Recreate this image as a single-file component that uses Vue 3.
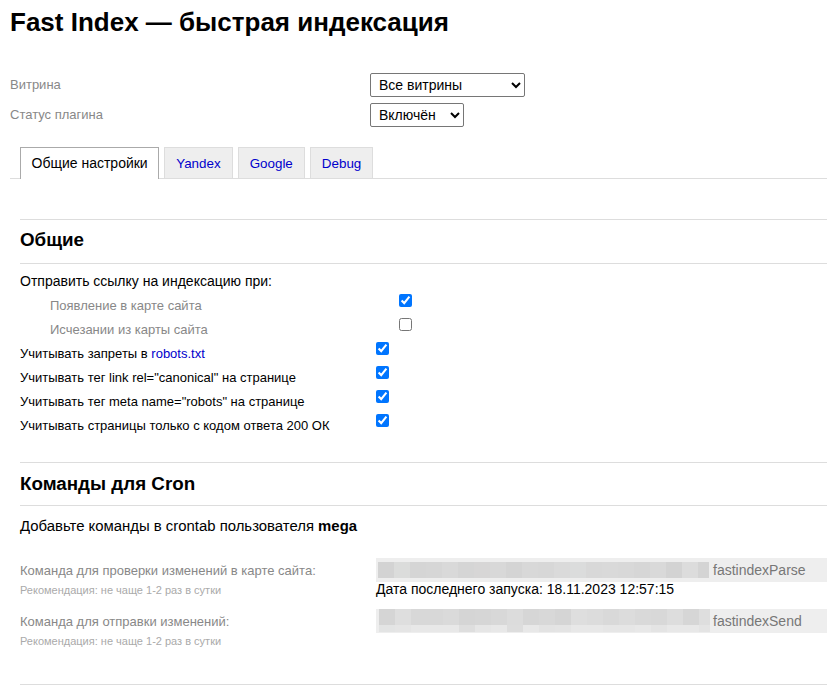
<script setup>
const tabs = ["Yandex", "Google", "Debug"];

const subOptions = [
  { label: "Появление в карте сайта", checked: true },
  { label: "Исчезании из карты сайта", checked: false },
];

const options = [
  'Учитывать тег link rel="canonical" на странице',
  'Учитывать тег meta name="robots" на странице',
  "Учитывать страницы только с кодом ответа 200 ОК",
];

// замазанный путь в команде
const shades1 = ["#d3d3d3", "#dbdcdb", "#d5d5d5", "#d6d6d6", "#d9d9d9", "#d5d5d5", "#d7d6d6", "#d8d8d8", "#d4d4d4", "#d8d8d8", "#d7d7d7", "#dadada", "#dbdcdc", "#d8d8d8", "#d9d9d9", "#d8d8d8", "#d6d6d6", "#d9d9d9", "#d3d3d3", "#dcdcdc", "#d4d4d4", "#dadada"];
const shades2 = ["#d5d5d5", "#dedede", "#d8d8d8", "#d8d8d8", "#dadada", "#d5d5d5", "#d6d6d6", "#d8d8d8", "#dcdcdc", "#d6d6d6", "#d8d8d8", "#d5d5d5", "#dedede", "#dcdcdc", "#d9d9d9", "#dcdcdc", "#d9d9d9", "#d8d8d8", "#dddddd", "#d6d6d6", "#dedede", "#dcdcdc"];
const shades2Low = ["#e3e4e4", "#e5e5e5", "#e8e8e8", "#e8e8e8", "#e8e8e8", "#dedede", "#e6e6e6", "#e8e8e8", "#dddddd", "#e8e8e8", "#e3e3e3", "#e4e4e4", "#e8e8e8", "#e8e8e8", "#e6e6e6", "#e6e6e6", "#e8e8e8", "#e4e4e4", "#e8e8e8", "#e8e8e8", "#e4e4e4", "#e2e2e2"];
</script>

<template>
  <div class="page">
    <h1>Fast Index — быстрая индексация</h1>

    <div class="field first">
      <label>Витрина</label>
      <select class="sel-wide"><option>Все витрины</option></select>
    </div>
    <div class="field">
      <label>Статус плагина</label>
      <select class="sel-small"><option>Включён</option></select>
    </div>

    <div class="tabs">
      <div class="tab active">Общие настройки</div>
      <a v-for="tab in tabs" :key="tab" class="tab" href="#">{{ tab }}</a>
    </div>

    <div class="content">
      <h2>Общие</h2>
      <div class="intro">Отправить ссылку на индексацию при:</div>

      <div v-for="item in subOptions" :key="item.label" class="row sub">
        <span class="row-label">{{ item.label }}</span>
        <input type="checkbox" :checked="item.checked" />
      </div>

      <div class="row">
        <span class="row-label">Учитывать запреты в <a href="#">robots.txt</a></span>
        <input type="checkbox" checked />
      </div>
      <div v-for="item in options" :key="item" class="row">
        <span class="row-label">{{ item }}</span>
        <input type="checkbox" checked />
      </div>

      <h2 class="cron-title">Команды для Cron</h2>
      <div class="cron-note">Добавьте команды в crontab пользователя <b>mega</b></div>

      <div class="cmd cmd-first">
        <div class="cmd-label">
          <div>Команда для проверки изменений в карте сайта:</div>
          <small>Рекомендация: не чаще 1-2 раз в сутки</small>
        </div>
        <div class="cmd-value">
          <div class="cmd-box">
            <div class="mosaic">
              <div class="mosaic-row">
                <i v-for="(c, i) in shades1" :key="i" :style="{ background: c }"></i>
              </div>
            </div>
            <span>fastindexParse</span>
          </div>
          <div class="last-run">Дата последнего запуска: 18.11.2023 12:57:15</div>
        </div>
      </div>

      <div class="cmd">
        <div class="cmd-label">
          <div>Команда для отправки изменений:</div>
          <small>Рекомендация: не чаще 1-2 раз в сутки</small>
        </div>
        <div class="cmd-value">
          <div class="cmd-box">
            <div class="mosaic mosaic-tall">
              <div class="mosaic-row">
                <i v-for="(c, i) in shades2" :key="i" :style="{ background: c }"></i>
              </div>
              <div class="mosaic-row low">
                <i v-for="(c, i) in shades2Low" :key="i" :style="{ background: c }"></i>
              </div>
            </div>
            <span>fastindexSend</span>
          </div>
        </div>
      </div>

      <div class="bottom-line"></div>
    </div>
  </div>
</template>

<style scoped>
.page {
  font-family: "Liberation Sans", Arial, sans-serif;
  font-size: 14px;
  color: #000;
  padding-left: 10px;
  height: 685px;
  overflow: hidden;
  box-sizing: border-box;
}

h1 {
  margin: 0;
  padding-top: 7px;
  font-size: 26px;
  line-height: 30px;
  font-weight: bold;
}

.field {
  display: flex;
  align-items: center;
  height: 24px;
  margin-top: 6px;
  color: #888;
  font-size: 13px;
}

.field.first {
  margin-top: 36px;
}

.field label {
  width: 360px;
  padding-bottom: 2px;
}

select {
  height: 24px;
  font-family: "Liberation Sans", Arial, sans-serif;
  font-size: 14px;
  padding-left: 4px;
  background: #fff;
  color: #000;
  border: 1px solid #767676;
  border-radius: 2px;
  box-sizing: border-box;
}

.sel-wide {
  width: 155px;
}

.sel-small {
  width: 94px;
}

.tabs {
  display: flex;
  gap: 5px;
  height: 31px;
  margin-top: 20px;
  padding-left: 10px;
  border-bottom: 1px solid #ddd;
}

.tab {
  display: block;
  height: 30px;
  line-height: 31px;
  padding: 0 11px;
  font-size: 13.4px;
  background: #eee;
  border: 1px solid #ddd;
  border-bottom: none;
  color: #00c;
  text-decoration: none;
}

.tab.active {
  height: 31px;
  padding: 0 10.5px;
  font-size: 14px;
  background: #fff;
  border-color: #aaa;
  color: #000;
}

.content {
  padding-left: 10px;
}

h2 {
  margin: 40px 0 0;
  height: 43px;
  line-height: 40px;
  font-size: 18.8px;
  font-weight: bold;
  border-top: 1px solid #ddd;
  border-bottom: 1px solid #ddd;
}

.intro {
  margin: 9px 0 1px;
  line-height: 17px;
}

.row {
  display: flex;
  height: 24px;
  font-size: 13px;
}

.row-label {
  width: 356px;
  padding-top: 6px;
  line-height: 17px;
}

.row.sub {
  padding-left: 30px;
  color: #888;
}

.row.sub .row-label {
  width: 349px;
}

.row a {
  color: #00c;
  text-decoration: none;
}

input[type="checkbox"] {
  width: 13px;
  height: 13px;
  margin: 3px 0 0;
  accent-color: #0075ff;
}

.cron-title {
  margin-top: 27px;
  height: 42px;
  line-height: 42px;
}

.cron-note {
  margin-top: 12px;
  line-height: 17px;
  font-size: 14.9px;
}

.cmd {
  display: flex;
}

.cmd-first {
  margin-top: 23px;
}

.cmd + .cmd {
  margin-top: 11px;
}

.cmd-label {
  width: 356px;
  font-size: 13px;
  color: #888;
  padding-top: 5px;
  line-height: 16px;
}

.cmd-label small {
  display: block;
  font-size: 11px;
  line-height: 14px;
  margin-top: 4px;
  color: #aaa;
}

.cmd-value {
  flex: 1;
}

.cmd-box {
  display: flex;
  align-items: center;
  height: 24px;
  background: #eee;
  color: #777;
}

.mosaic {
  width: 331px;
  height: 16px;
  margin-left: 2px;
  overflow: hidden;
  flex-shrink: 0;
}

.mosaic-tall {
  align-self: flex-start;
  height: 23px;
  margin-left: 3px;
}

.mosaic-row {
  display: flex;
  height: 16px;
}

.mosaic-row.low {
  height: 7px;
}

.mosaic i {
  display: block;
  width: 16px;
  flex-shrink: 0;
}

.cmd-box span {
  margin-left: 4px;
}

.mosaic-tall + span {
  margin-left: 3px;
}

.last-run {
  line-height: 17px;
  margin-top: -1px;
}

.bottom-line {
  margin-top: 36px;
  border-top: 1px solid #ddd;
}
</style>

<style>
html, body {
  background: #fff;
}
</style>
